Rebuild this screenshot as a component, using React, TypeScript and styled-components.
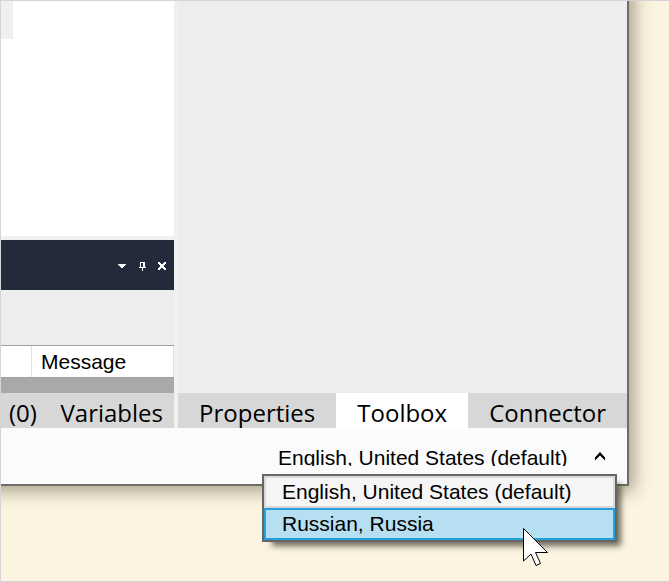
import React, { useState } from "react";
import styled, { createGlobalStyle } from "styled-components";

const GlobalStyle = createGlobalStyle`
  *, *::before, *::after { box-sizing: border-box; }
  body { margin: 0; font-family: "Liberation Sans", Arial, sans-serif; color: #000; }
  button { font: inherit; color: inherit; border: 0; padding: 0; background: none; cursor: default; }
`;

const Desktop = styled.main`
  display: flex;
  min-height: 100vh;
  padding: 0 40px 95px 0;
  border: 1px solid #d5d5d5;
  background: #fcf4e0;
  overflow: hidden;
`;

/* The window runs past the top left corner of the visible desktop. */
const AppWindow = styled.section`
  display: flex;
  flex-direction: column;
  flex: 1;
  min-width: 0;
  margin: -24px 0 0 -24px;
  padding: 24px 0 0 24px;
  border: solid #6f6b66;
  border-width: 0 2px 2px 0;
  background: #ededed;
  box-shadow: 3px 3px 16px 2px rgba(60, 50, 35, 0.44);
`;

const Workspace = styled.div`
  display: flex;
  gap: 4px;
  flex: 1;
  background: #f0f0f0;
`;

const LeftPane = styled.div`
  display: flex;
  flex-direction: column;
  width: 173px;
  background: #ededed;
`;

const RightPane = styled.div`
  display: flex;
  flex-direction: column;
  flex: 1;
  min-width: 0;
  background: #ededed;
`;

const DocumentArea = styled.div`
  flex: 1;
  min-height: 120px;
  background: #fff;
`;

const DocumentEdge = styled.div`
  width: 12px;
  height: 38px;
  background: #f0f0f0;
`;

const PanelHeader = styled.header`
  display: flex;
  align-items: center;
  justify-content: flex-end;
  gap: 8px;
  height: 54px;
  padding: 2px 6px 0 0;
  border-top: 4px solid #f0f0f0;
  background: #232a3a;
`;

const HeaderButton = styled.button`
  display: flex;
  align-items: center;
  justify-content: center;
  width: 12px;
  height: 16px;
`;

const PanelToolbar = styled.div`
  height: 55px;
`;

const MessageTable = styled.table`
  width: 100%;
  table-layout: fixed;
  border-collapse: separate;
  border-spacing: 0;
  border-top: 1px solid #a0a0a0;
  border-bottom: 1px solid #a0a0a0;
  background: #fff;
`;

const ColumnHead = styled.th<{ $width?: number }>`
  width: ${({ $width }) => ($width ? `${$width}px` : "auto")};
  height: 31px;
  padding: 0 0 0 9px;
  border-right: 1px solid #e2e2e2;
  font-size: 21px;
  font-weight: 400;
  line-height: 28px;
  text-align: left;
`;

const ScrollTrack = styled.div`
  height: 15px;
  background: #a9a9a9;
`;

const TabStrip = styled.div`
  display: flex;
  height: 35px;
  background: #d7d7d7;
  overflow: hidden;
`;

const Spacer = styled.div`
  flex: 1;
`;

const Tab = styled.button<{ $active?: boolean; $pad?: number }>`
  height: 40px;
  padding: 0 ${({ $pad }) => $pad ?? 20}px;
  background: ${({ $active }) => ($active ? "#fff" : "transparent")};
  font-family: "Segoe UI", "Open Sans", "Noto Sans", sans-serif;
  font-size: 24px;
  line-height: 40px;
  white-space: nowrap;
`;

const GrowingTab = styled(Tab)`
  flex: 1 1 auto;
`;

const StatusBar = styled.footer`
  display: flex;
  justify-content: flex-end;
  height: 56px;
  padding: 10px 10px 10px 0;
  background: #fbfbfb;
`;

const LanguagePicker = styled.div`
  position: relative;
  width: 355px;
  font-size: 21px;
`;

const PickerButton = styled.button`
  display: flex;
  align-items: center;
  justify-content: space-between;
  width: 100%;
  height: 36px;
  padding: 2px 10px 0 16px;
`;

const PickerValue = styled.span`
  height: 18px;
  line-height: 20px;
  white-space: nowrap;
  overflow: hidden;
`;

const OptionList = styled.ul`
  position: absolute;
  top: 100%;
  left: 0;
  right: 0;
  margin: 0;
  padding: 0;
  list-style: none;
  border: 2px solid #666;
  background: #f5f5f5;
  box-shadow: 7px 7px 6px -3px rgba(50, 45, 35, 0.7);
`;

const Option = styled.li<{ $highlighted: boolean }>`
  height: 32px;
  padding-left: 16px;
  border: 2px solid ${({ $highlighted }) => ($highlighted ? "#26a0da" : "#d9d9d9")};
  background: ${({ $highlighted }) => ($highlighted ? "#b7dff2" : "#f5f5f5")};
  line-height: 28px;
  white-space: nowrap;
`;

const Pointer = styled.svg`
  position: absolute;
  top: 90px;
  right: 68px;
  pointer-events: none;
`;

const languages = ["English, United States (default)", "Russian, Russia"];

function MenuIcon() {
  return (
    <svg width="8" height="4" viewBox="0 0 8 4" shapeRendering="crispEdges" aria-hidden="true">
      <path d="M0 0h8v1H7v1H6v1H5v1H3V3H2V2H1V1H0z" fill="#fff" />
    </svg>
  );
}

function PinIcon() {
  return (
    <svg width="7" height="9" viewBox="0 0 7 9" shapeRendering="crispEdges" aria-hidden="true">
      <path d="M1 0h5v5h1v1H4v3H3V6H0V5h1zM2 1v4h2V1z" fill="#fff" fillRule="evenodd" />
    </svg>
  );
}

function CloseIcon() {
  return (
    <svg width="8" height="8" viewBox="0 0 8 8" shapeRendering="crispEdges" aria-hidden="true">
      <path
        d="M0 0h2v1h1v1h2V1h1V0h2v2H7v1H6v2h1v1h1v2H6V7H5V6H3v1H2v1H0V6h1V5h1V3H1V2H0z"
        fill="#fff"
      />
    </svg>
  );
}

export default function App() {
  const [open, setOpen] = useState(true);
  const [highlighted, setHighlighted] = useState(1);
  const [activeTab, setActiveTab] = useState("Toolbox");

  return (
    <>
      <GlobalStyle />
      <Desktop>
        <AppWindow>
          <Workspace>
            <LeftPane>
              <DocumentArea>
                <DocumentEdge />
              </DocumentArea>
              <PanelHeader>
                <HeaderButton aria-label="Panel menu"><MenuIcon /></HeaderButton>
                <HeaderButton aria-label="Pin panel"><PinIcon /></HeaderButton>
                <HeaderButton aria-label="Close panel"><CloseIcon /></HeaderButton>
              </PanelHeader>
              <PanelToolbar />
              <MessageTable>
                <thead>
                  <tr>
                    <ColumnHead $width={31} />
                    <ColumnHead scope="col">Message</ColumnHead>
                  </tr>
                </thead>
              </MessageTable>
              <ScrollTrack />
              <TabStrip role="tablist" aria-label="Output">
                <Tab role="tab" $pad={8}>(0)</Tab>
                <Spacer />
                <Tab role="tab" $pad={11}>Variables</Tab>
              </TabStrip>
            </LeftPane>
            <RightPane>
              <Spacer />
              <TabStrip role="tablist" aria-label="Tools">
                {["Properties", "Toolbox", "Connector"].map((name) => (
                  <GrowingTab
                    key={name}
                    role="tab"
                    aria-selected={name === activeTab}
                    $active={name === activeTab}
                    onClick={() => setActiveTab(name)}
                  >
                    {name}
                  </GrowingTab>
                ))}
              </TabStrip>
            </RightPane>
          </Workspace>
          <StatusBar>
            <LanguagePicker>
              <PickerButton
                role="combobox"
                aria-label="Language"
                aria-haspopup="listbox"
                aria-expanded={open}
                aria-controls="language-options"
                onClick={() => setOpen(!open)}
              >
                <PickerValue>{languages[0]}</PickerValue>
                <svg width="14" height="12" viewBox="0 0 14 12" aria-hidden="true">
                  <path d="M2 6.500 7 1l5 5.500V9.500L7 4.500 2 9.500z" fill="#000" />
                </svg>
              </PickerButton>
              {open && (
                <OptionList id="language-options" role="listbox" aria-label="Language">
                  {languages.map((name, i) => (
                    <Option
                      key={name}
                      role="option"
                      aria-selected={i === 0}
                      $highlighted={i === highlighted}
                      onMouseEnter={() => setHighlighted(i)}
                    >
                      {name}
                    </Option>
                  ))}
                </OptionList>
              )}
              <Pointer width="26" height="40" viewBox="0 0 26 40" aria-hidden="true">
                <path
                  d="M.5.500V33l7.500-7 5 11.500 4.500-2-5-11H24.500z"
                  fill="#fff"
                  stroke="#000"
                />
              </Pointer>
            </LanguagePicker>
          </StatusBar>
        </AppWindow>
      </Desktop>
    </>
  );
}
